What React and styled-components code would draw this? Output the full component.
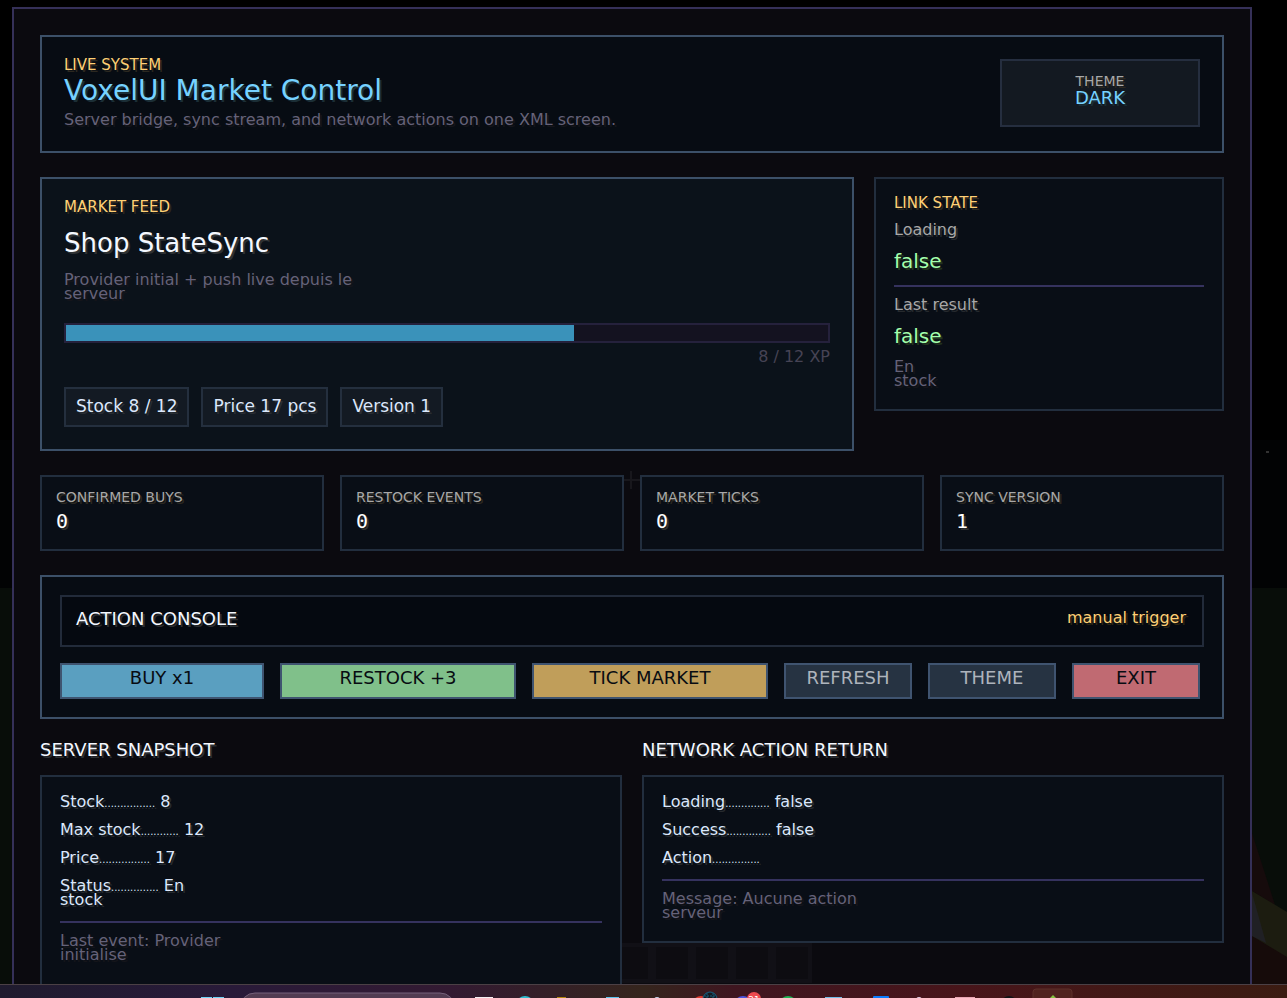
import { styled, createGlobalStyle } from "styled-components";

const stats = [
  { label: "CONFIRMED BUYS", value: 0 },
  { label: "RESTOCK EVENTS", value: 0 },
  { label: "MARKET TICKS", value: 0 },
  { label: "SYNC VERSION", value: 1 },
];

const actions = [
  { label: "BUY x1", bg: "#5a9fc0", color: "#080c12" },
  { label: "RESTOCK +3", bg: "#80c08a", color: "#080c12" },
  { label: "TICK MARKET", bg: "#c09e5a", color: "#080c12" },
  { label: "REFRESH", bg: "#263342", color: "#aeb4bc" },
  { label: "THEME", bg: "#263342", color: "#aeb4bc" },
  { label: "EXIT", bg: "#c06a72", color: "#080c12" },
];

const LEADER_LENGTH = 21;

export default function App() {
  const stock = 8;
  const maxStock = 12;

  return (
    <Desktop>
      <GlobalStyle />
      <Screen>
        <Scene />
        <Frame>
          <Header>
            <div>
              <Label>LIVE SYSTEM</Label>
              <Title>VoxelUI Market Control</Title>
              <Muted>
                Server bridge, sync stream, and network actions on one XML
                screen.
              </Muted>
            </div>
            <ThemeBox>
              <Label $color="#a8a8a8" $size={14}>
                THEME
              </Label>
              <ThemeName>DARK</ThemeName>
            </ThemeBox>
          </Header>

          <FeedRow>
            <FeedCard>
              <Label>MARKET FEED</Label>
              <FeedTitle>Shop StateSync</FeedTitle>
              <Muted>
                Provider initial + push live depuis le
                <br />
                serveur
              </Muted>
              <Bar
                role="progressbar"
                aria-label="XP"
                aria-valuenow={stock}
                aria-valuemax={maxStock}
              >
                <BarFill style={{ width: `${(stock / maxStock) * 100}%` }} />
              </Bar>
              <Xp>
                {stock} / {maxStock} XP
              </Xp>
              <Chips>
                <Chip>
                  Stock {stock} / {maxStock}
                </Chip>
                <Chip>Price 17 pcs</Chip>
                <Chip>Version 1</Chip>
              </Chips>
            </FeedCard>

            <Panel>
              <Label>LINK STATE</Label>
              <Line $color="#a8a8a8">Loading</Line>
              <Flag>false</Flag>
              <Divider />
              <Line $color="#a8a8a8">Last result</Line>
              <Flag>false</Flag>
              <Muted>
                En
                <br />
                stock
              </Muted>
            </Panel>
          </FeedRow>

          <Stats>
            {stats.map((s) => (
              <Stat key={s.label}>
                <Label $color="#a8a8a8" $size={14}>
                  {s.label}
                </Label>
                <StatValue>{s.value}</StatValue>
              </Stat>
            ))}
          </Stats>

          <Console>
            <ConsoleBar>
              <ConsoleTitle>ACTION CONSOLE</ConsoleTitle>
              <Trigger>manual trigger</Trigger>
            </ConsoleBar>
            <Actions>
              {actions.map((a) => (
                <ActionBtn key={a.label} $bg={a.bg} $color={a.color}>
                  {a.label}
                </ActionBtn>
              ))}
            </Actions>
          </Console>

          <Columns>
            <section>
              <SectionTitle>SERVER SNAPSHOT</SectionTitle>
              <Panel $bottom={44}>
                <Entry name="Stock">{stock}</Entry>
                <Entry name="Max stock">{maxStock}</Entry>
                <Entry name="Price">17</Entry>
                <Entry name="Status">
                  En
                  <br />
                  stock
                </Entry>
                <Divider />
                <Muted>
                  Last event: Provider
                  <br />
                  initialise
                </Muted>
              </Panel>
            </section>
            <section>
              <SectionTitle>NETWORK ACTION RETURN</SectionTitle>
              <Panel>
                <Entry name="Loading">false</Entry>
                <Entry name="Success">false</Entry>
                <Entry name="Action" />
                <Divider />
                <Muted>
                  Message: Aucune action
                  <br />
                  serveur
                </Muted>
              </Panel>
            </section>
          </Columns>
        </Frame>
      </Screen>
      <Taskbar />
    </Desktop>
  );
}

function Entry({ name, children }) {
  return (
    <Line>
      {name}
      <Leader>{".".repeat(LEADER_LENGTH - name.length)}</Leader> {children}
    </Line>
  );
}

// the game world, seen dimly behind the frame
function Scene() {
  return (
    <SceneSvg
      viewBox="0 0 1287 984"
      preserveAspectRatio="xMaxYMin slice"
      aria-hidden="true"
    >
      <rect width="1287" height="984" fill="#000" />
      <rect y="440" width="1287" height="148" fill="#020304" />
      <rect y="588" width="1287" height="396" fill="#080d09" />
      <path d="M1252 833 L1275 905 L1252 891 Z" fill="#160b0c" />
      <path d="M1252 930 L1287 950 V984 H1252 Z" fill="#160b0a" />
      <path d="M1252 891 L1287 912 V957 L1252 936 Z" fill="#1c1c10" />
      <path d="M1252 893 L1266 943 L1252 936 Z" fill="#202024" />
      <rect x="1266" y="451" width="3" height="2" fill="#333" />
      <path d="M631 471 V489 M622 480 H640" stroke="#bbb" strokeWidth="2" />
      <path d="M600 943 H812 V983 H600 Z" fill="#585860" />
      <g fill="#1c1c1c">
        <rect x="616" y="947" width="32" height="32" />
        <rect x="656" y="947" width="32" height="32" />
        <rect x="696" y="947" width="32" height="32" />
        <rect x="736" y="947" width="32" height="32" />
        <rect x="776" y="947" width="32" height="32" />
      </g>
    </SceneSvg>
  );
}

function Taskbar() {
  return (
    <TaskbarWrap>
      <svg
        width="100%"
        height="13"
        viewBox="0 0 1287 13"
        preserveAspectRatio="xMidYMin slice"
        aria-hidden="true"
      >
        <rect x="201" y="12" width="11" height="9" fill="#6fd3f5" />
        <rect x="213" y="12" width="11" height="9" fill="#6fd3f5" />
        <rect
          x="240"
          y="8"
          width="215"
          height="30"
          rx="15"
          fill="#523c52"
          stroke="#75607a"
        />
        <rect x="475" y="12" width="18" height="8" fill="#f4eef2" />
        <circle cx="525" cy="20" r="9" fill="#2dbccf" />
        <rect x="557" y="12" width="9" height="8" fill="#b3860d" />
        <rect x="606" y="12" width="13" height="8" fill="#5cc4ee" />
        <circle cx="657" cy="15" r="3" fill="#c7d5ee" />
        <circle cx="701" cy="20" r="9" fill="#e23b2e" />
        <circle cx="710" cy="14" r="7" fill="#151b22" stroke="#176080" />
        <path
          d="M704 11 H716 M707 8 V14 M713 8 V14"
          stroke="#176080"
          strokeDasharray="2 1"
        />
        <circle cx="743" cy="20" r="9" fill="#4f55e0" />
        <circle cx="754" cy="14" r="7" fill="#ee4a4f" />
        <text
          x="754"
          y="18"
          fontSize="9"
          fontFamily="DejaVu Sans, sans-serif"
          fill="#fff"
          textAnchor="middle"
        >
          21
        </text>
        <circle cx="788" cy="20" r="9" fill="#1fb455" />
        <rect x="825" y="12" width="17" height="8" fill="#72bde8" />
        <rect x="873" y="11" width="16" height="9" rx="1" fill="#0a7cff" />
        <circle cx="919" cy="15" r="3" fill="#e6cfe6" />
        <rect x="955" y="12" width="20" height="8" fill="#e9a6b4" />
        <circle cx="1009" cy="19" r="8" fill="#101416" />
        <rect
          x="1033"
          y="4"
          width="39"
          height="30"
          rx="3"
          fill="#50231f"
          stroke="#5d302b"
        />
        <path d="M1053 10 L1058 15 H1048 Z" fill="#83c441" />
      </svg>
    </TaskbarWrap>
  );
}

const GlobalStyle = createGlobalStyle`
  * {
    box-sizing: border-box;
  }
  body {
    margin: 0;
    background: #000;
    font-family: "DejaVu Sans", sans-serif;
  }
  h1, h2, h3, p {
    margin: 0;
    font-weight: 400;
  }
`;

const Desktop = styled.div`
  display: flex;
  flex-direction: column;
  height: 100vh;
  overflow: hidden;
`;

const Screen = styled.main`
  position: relative;
  flex: 1;
  min-height: 0;
  overflow: hidden;
  padding: 7px 35px 0 12px;
`;

const SceneSvg = styled.svg`
  position: absolute;
  inset: 0;
  width: 100%;
  height: 100%;
`;

const Frame = styled.div`
  position: relative;
  display: flex;
  flex-direction: column;
  gap: 24px;
  min-height: 100%;
  padding: 26px;
  border: 2px solid #353058;
  background: rgba(12, 11, 16, 0.93);
`;

const Card = styled.section`
  border: 2px solid #3c5068;
  background: #070c13;
`;

const Header = styled(Card)`
  display: flex;
  justify-content: space-between;
  padding: 22px 22px 24px;
`;

const Label = styled.p`
  color: ${({ $color }) => $color || "#ffd075"};
  font-size: ${({ $size }) => $size || 15}px;
  line-height: 12px;
  text-shadow: 2px 2px #2c2820;
`;

const Title = styled.h1`
  margin: 6px 0 8px;
  color: #76d2ff;
  font-size: 28px;
  line-height: 28px;
  text-shadow: 2px 2px #1b2e36;
`;

const Line = styled.p`
  color: ${({ $color }) => $color || "#dce8fc"};
  font-size: 16px;
  line-height: 14px;
  text-shadow: 2px 2px #262a2e;
`;

const Muted = styled(Line)`
  color: #656279;
  text-shadow: 2px 2px #15151a;
`;

const ThemeBox = styled.div`
  width: 200px;
  height: 68px;
  padding: 14px 16px 16px;
  border: 2px solid #252e3f;
  background: #131921;
  text-align: center;
`;

const ThemeName = styled.p`
  color: #76d2ff;
  font-size: 18px;
  line-height: 22px;
  text-shadow: 2px 2px #1b2e36;
`;

const FeedRow = styled.div`
  display: grid;
  grid-template-columns: 407fr 175fr;
  align-items: start;
  gap: 20px;
`;

const FeedCard = styled(Card)`
  padding: 22px;
  background: #0b121a;
`;

const FeedTitle = styled.h2`
  margin: 16px 0;
  color: #f4f8ff;
  font-size: 26px;
  line-height: 28px;
  text-shadow: 2px 2px #2e3133;
`;

const Bar = styled.div`
  height: 20px;
  margin: 22px 0 8px;
  border: 2px solid #25213c;
  background: #141220;
`;

const BarFill = styled.div`
  height: 100%;
  background: #3a92ba;
`;

const Xp = styled.p`
  color: #464354;
  font-size: 16px;
  line-height: 12px;
  text-align: right;
`;

const Chips = styled.div`
  display: flex;
  gap: 12px;
  margin-top: 24px;
`;

const Chip = styled.span`
  padding: 10px 10px 12px;
  border: 2px solid #242f3e;
  background: #131a23;
  color: #dce8fc;
  font-size: 17px;
  line-height: 14px;
  text-shadow: 2px 2px #2a2e33;
`;

const Panel = styled.div`
  display: flex;
  flex-direction: column;
  gap: 14px;
  padding: 18px 18px ${({ $bottom }) => $bottom || 21}px;
  border: 2px solid #222e3e;
  background: #090e16;
`;

const Flag = styled.p`
  color: #a4ffac;
  font-size: 20px;
  line-height: 20px;
  text-shadow: 2px 2px #22331f;
`;

const Divider = styled.hr`
  width: 100%;
  height: 2px;
  margin: 0 0 -3px;
  border: 0;
  background: #35325e;
`;

const Stats = styled.div`
  display: grid;
  grid-template-columns: repeat(4, 1fr);
  gap: 16px;
`;

const Stat = styled.div`
  padding: 14px 14px 18px;
  border: 2px solid #222e3e;
  background: #090e16;
`;

const StatValue = styled.p`
  margin-top: 8px;
  color: #fff;
  font-family: "DejaVu Sans Mono", monospace;
  font-size: 20px;
  line-height: 20px;
  text-shadow: 2px 2px #303030;
`;

const Console = styled(Card)`
  display: flex;
  flex-direction: column;
  gap: 16px;
  padding: 18px;
`;

const ConsoleBar = styled.div`
  display: flex;
  justify-content: space-between;
  padding: 12px 16px 16px 14px;
  border: 2px solid #222b3a;
  background: #050910;
`;

const ConsoleTitle = styled.h2`
  color: #f4f8ff;
  font-size: 18px;
  line-height: 20px;
  text-shadow: 2px 2px #2c2e31;
`;

const Trigger = styled.span`
  color: #ffd075;
  font-size: 16px;
  line-height: 18px;
  text-shadow: 2px 2px #2c2615;
`;

const Actions = styled.div`
  display: grid;
  grid-template-columns: 51fr 59fr 59fr 32fr 32fr 32fr;
  gap: 16px;
  padding-right: 4px;
`;

const ActionBtn = styled.button`
  height: 36px;
  padding: 0 0 6px;
  border: 2px solid #3f5470;
  background: ${({ $bg }) => $bg};
  color: ${({ $color }) => $color};
  font-family: inherit;
  font-size: 18px;
  line-height: 20px;
  cursor: pointer;
`;

const Columns = styled.div`
  display: grid;
  grid-template-columns: 1fr 1fr;
  align-items: start;
  gap: 20px;
`;

const SectionTitle = styled.h2`
  margin-bottom: 18px;
  color: #f4f8ff;
  font-size: 18px;
  line-height: 14px;
  text-shadow: 2px 2px #2c2f33;
`;

const Leader = styled.span`
  font-size: 10px;
  line-height: 0;
`;

const TaskbarWrap = styled.footer`
  height: 14px;
  overflow: hidden;
  border-top: 1px solid #4b4045;
  background: linear-gradient(
    90deg,
    #1f1b2e 0%,
    #291a39 18%,
    #331a32 35%,
    #35251d 50%,
    #3f1620 57%,
    #48151a 75%,
    #3b1c12 100%
  );

  svg {
    display: block;
  }
`;
